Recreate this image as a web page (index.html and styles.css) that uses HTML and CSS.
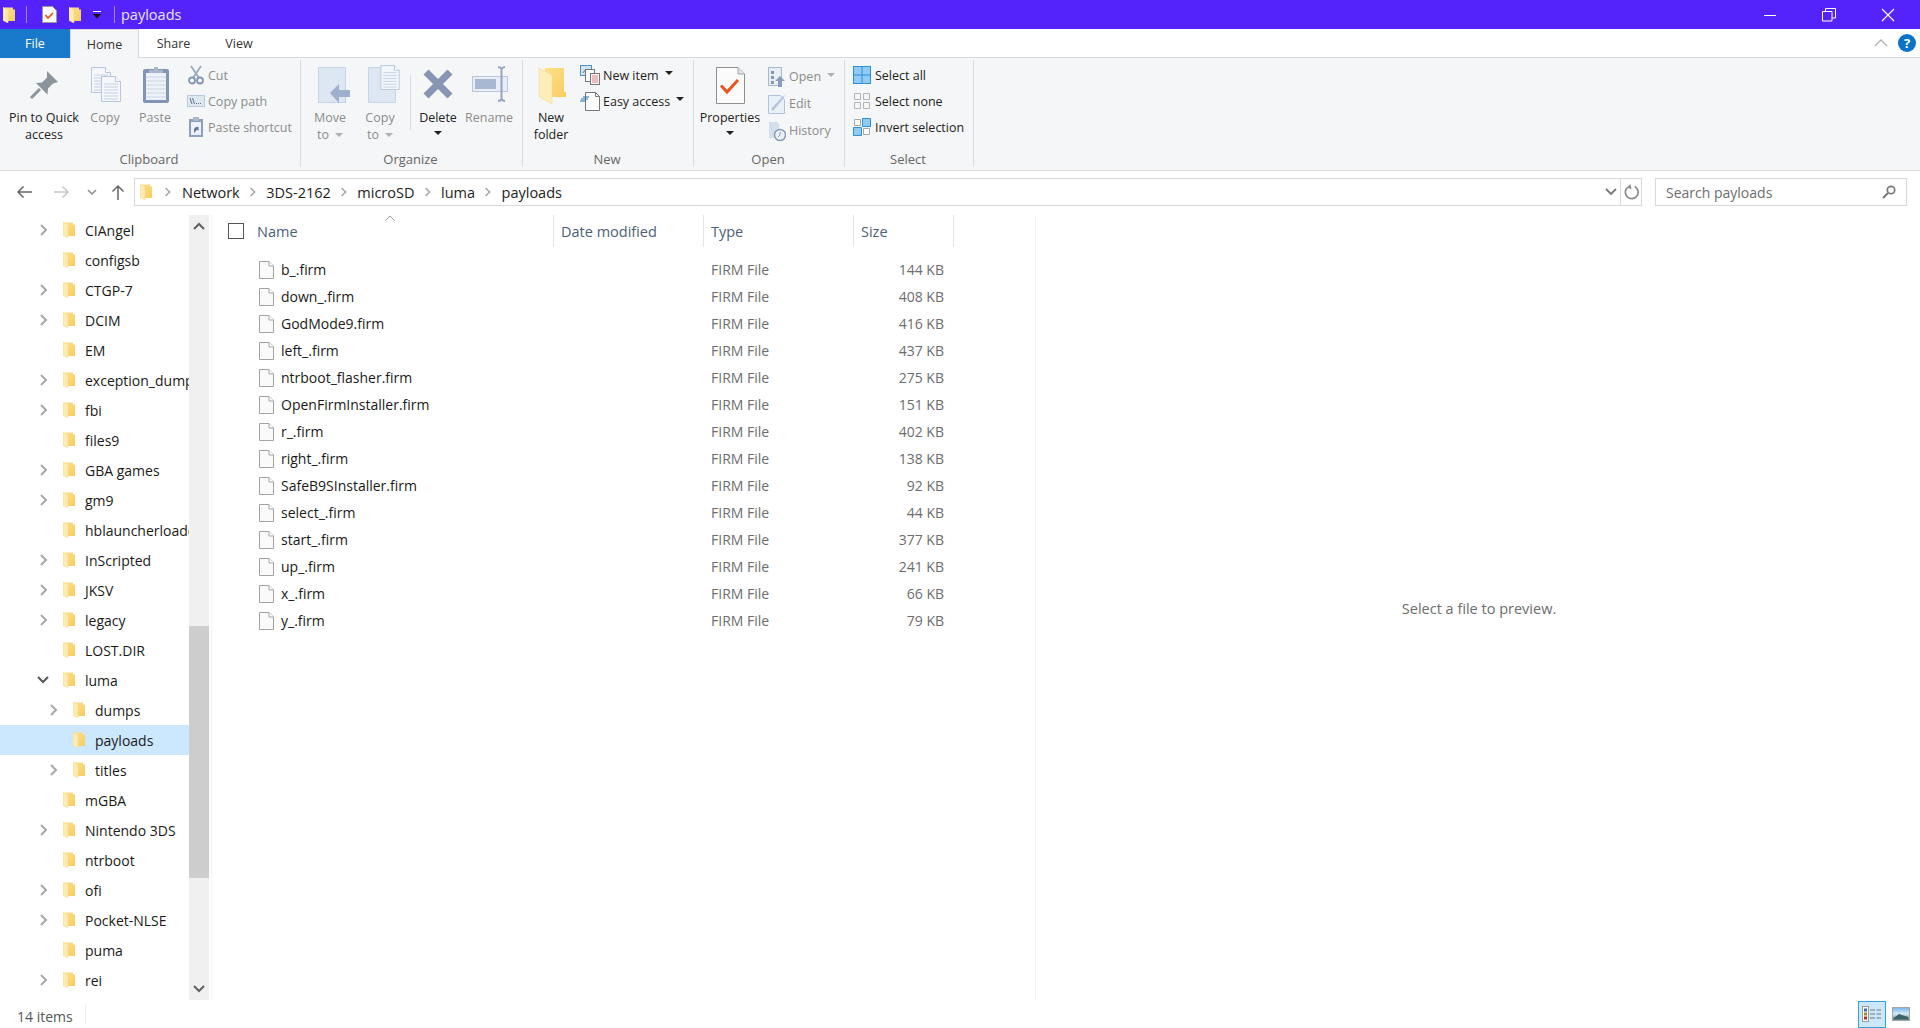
FILE: index.html
```html
<!DOCTYPE html>
<html lang="en">
<head>
<meta charset="utf-8">
<title>payloads</title>
<link rel="stylesheet" href="styles.css">
</head>
<body>
<svg class="sprite" aria-hidden="true">
  <defs>
    <linearGradient id="gold" x1="0" y1="0" x2="1" y2="1"><stop offset="0" stop-color="#fde08a"/><stop offset="1" stop-color="#f8cc5f"/></linearGradient>
    <symbol id="folder" viewBox="0 0 12 16">
      <path d="M2 .5h8v2h2v11.500H2z" fill="url(#gold)"/>
      <path d="M0 0L5 2.500V16L0 13.500z" fill="#fdebb0" stroke="#f3d98c" stroke-width=".5"/>
    </symbol>
    <symbol id="chev-r" viewBox="0 0 10 12"><path d="M2 1l5 5-5 5" fill="none" stroke="#a8a8a8" stroke-width="2"/></symbol>
    <symbol id="file" viewBox="0 0 15 18"><path d="M.5.500h9.500l4.500 4.500v12.500H.5z" fill="#fafafa" stroke="#a3a3a3"/><path d="M10 .5v4.500h4.500" fill="#fff" stroke="#a3a3a3"/></symbol>
    <symbol id="doc-lines" viewBox="0 0 20 26"><path d="M.5.500h14l5 5v20H.5z" fill="#f4f7fc" stroke="#b7c6de"/><path d="M14.500.5v5h5" fill="#fff" stroke="#b7c6de"/><path d="M3 8h14M3 11h14M3 14h14M3 17h14M3 20h14M3 23h14" stroke="#c5d1e4"/></symbol>
  </defs>
</svg>
<div class="window">
  <header class="titlebar">
    <svg class="qa-folder"><use href="#folder"/></svg>
    <span class="qa-sep sep-a"></span>
    <svg class="qa-prop" viewBox="0 0 15 17"><path d="M.5.500h10l4 4v12H.5z" fill="#fbfbfb" stroke="#9a9a9a"/><path d="M3.500 9l2.500 3 5-5" fill="none" stroke="#e8501c" stroke-width="1.700"/></svg>
    <svg class="qa-folder qa-folder-2"><use href="#folder"/></svg>
    <svg class="qa-drop" viewBox="0 0 8 8"><path d="M0 0h8v1H0z" fill="#fff"/><path d="M0 3h8L4 7.500z" fill="#111"/></svg>
    <span class="qa-sep sep-b"></span>
    <span class="win-title">payloads</span>
    <div class="win-controls">
      <svg class="wc" viewBox="0 0 14 14"><path d="M1 7.500h12" stroke="#fff"/></svg>
      <svg class="wc" viewBox="0 0 14 14"><path d="M.5 3.500h9.500v9.500H.5z M3.500 3.500V.5h10v9.500h-3.500" fill="none" stroke="#fff"/></svg>
      <svg class="wc" viewBox="0 0 14 14"><path d="M1 1l12 12M13 1L1 13" stroke="#fff" stroke-width="1.100"/></svg>
    </div>
  </header>

  <nav class="tabs">
    <span class="tab tab-file">File</span>
    <span class="tab tab-home">Home</span>
    <span class="tab tab-share">Share</span>
    <span class="tab tab-view">View</span>
    <svg class="collapse" viewBox="0 0 14 8"><path d="M1 7l6-6 6 6" fill="none" stroke="#b0b0b0" stroke-width="1.300"/></svg>
    <span class="help">?</span>
  </nav>

  <section class="ribbon">
    <div class="group g-clipboard">
      <div class="g-body">
        <div class="big w-pin">
          <svg class="big-ico" viewBox="0 0 40 40"><path d="M23 6l11 11-5 1.500-5 5-.5 6L12 18l6-.5 5-5z" fill="#8b949c"/><path d="M16 24L7 33" stroke="#8b949c" stroke-width="3"/></svg>
          <span class="big-t">Pin to Quick<br>access</span>
        </div>
        <div class="big w-copy off">
          <svg class="big-ico" viewBox="0 0 40 40"><use href="#doc-lines" x="6" y="2" width="20" height="26"/><use href="#doc-lines" x="16" y="11" width="20" height="26"/></svg>
          <span class="big-t">Copy</span>
        </div>
        <div class="big w-paste off">
          <svg class="big-ico" viewBox="0 0 40 40"><rect x="8" y="4" width="26" height="34" rx="2" fill="#8295b5"/><rect x="11" y="8" width="20" height="27" fill="#edf1f8"/><path d="M11 12h20M11 16h20M11 20h20M11 24h20M11 28h20M11 32h20" stroke="#cdd7e7"/><path d="M14 8V5h5V2h4v3h5v3z" fill="#a9b6cc"/></svg>
          <span class="big-t">Paste</span>
        </div>
        <div class="small-col off">
          <div class="small"><svg class="s-ico" viewBox="0 0 18 20"><path d="M4 1l8 12M14 1L6 13" stroke="#9aa8c0" stroke-width="1.800"/><circle cx="5" cy="15.500" r="3" fill="none" stroke="#8296b8" stroke-width="1.800"/><circle cx="13" cy="15.500" r="3" fill="none" stroke="#8296b8" stroke-width="1.800"/></svg><span>Cut</span></div>
          <div class="small"><svg class="s-ico" viewBox="0 0 18 20"><rect x=".5" y="4.500" width="17" height="11" fill="#dfe7f3" stroke="#bccadf"/><path d="M3 7l2 6M5.500 7l2 6" stroke="#5f7394"/><path d="M9 12.500h1M11 12.500h1M13 12.500h1" stroke="#5f7394"/></svg><span>Copy path</span></div>
          <div class="small"><svg class="s-ico" viewBox="0 0 18 20"><rect x="2" y="2" width="14" height="18" fill="#8ea0bd"/><rect x="4" y="5" width="10" height="13" fill="#eef2f8"/><rect x="6" y="0" width="6" height="4" fill="#a9b6cc"/><path d="M7 16v-4l2-2H7.500h4v4l-1.500-1.500L8 15z" fill="#5e7396"/></svg><span>Paste shortcut</span></div>
        </div>
      </div>
      <div class="g-label">Clipboard</div>
    </div>

    <div class="group g-organize">
      <div class="g-body">
        <div class="big w-move off">
          <svg class="big-ico" viewBox="0 0 40 40"><rect x="8.500" y="2.500" width="27" height="35" fill="#dde6f3" stroke="#c7d4e7"/><path d="M20 28l9-9v6h11v7H29v6z" fill="#9eb0cc"/></svg>
          <span class="big-t">Move<br>to<i class="caret caret-off"></i></span>
        </div>
        <div class="big w-copyto off">
          <svg class="big-ico" viewBox="0 0 40 40"><path d="M8.500 2.500h13v6h14v29h-27z" fill="#dde6f3" stroke="#c7d4e7"/><use href="#doc-lines" x="20" y="0" width="20" height="25"/></svg>
          <span class="big-t">Copy<br>to<i class="caret caret-off"></i></span>
        </div>
        <span class="o-sep"></span>
        <div class="big w-delete">
          <svg class="big-ico" viewBox="0 0 40 40"><path d="M8 7l24 24M32 7L8 31" stroke="#8797b3" stroke-width="7"/></svg>
          <span class="big-t">Delete<i class="caret caret-block"></i></span>
        </div>
        <div class="big w-rename off">
          <svg class="big-ico" viewBox="0 0 40 40"><rect x="3.500" y="11.500" width="35" height="15" fill="#e8eef7" stroke="#b8c7de"/><rect x="6" y="14" width="21" height="10" fill="#a8b8d2"/><path d="M29 2c2 0 3 1 3.500 2C33 3 34 2 36 2M32.500 4v30M29 36c2 0 3-1 3.500-2 .5 1 1.500 2 3.500 2" fill="none" stroke="#93a5c2" stroke-width="2"/></svg>
          <span class="big-t">Rename</span>
        </div>
      </div>
      <div class="g-label">Organize</div>
    </div>

    <div class="group g-new">
      <div class="g-body">
        <div class="big w-newf">
          <svg class="big-ico" viewBox="0 0 40 40"><path d="M14 3h19v24h2v5H14z" fill="url(#gold)"/><path d="M8 3l13 7v29L8 32z" fill="#fdeeb9" stroke="#f1dc9b" stroke-width=".6"/></svg>
          <span class="big-t">New<br>folder</span>
        </div>
        <div class="small-col">
          <div class="small s-new"><svg class="s-ico s-ico-w" viewBox="0 0 20 20"><rect x=".5" y=".5" width="11" height="10" fill="#cfe3f4" stroke="#4d93c4"/><path d="M3 8l2-3 2 2 2-2" stroke="#6a8d5a" fill="none"/><rect x="5.500" y="4.500" width="9" height="12" fill="#fff" stroke="#777"/><rect x="10.500" y="8.500" width="9" height="11" fill="#fdf3f3" stroke="#777"/><path d="M12 11h6M12 13h6M12 15h6M12 17h6" stroke="#d9828a"/></svg><span>New item</span><i class="caret caret-inline"></i></div>
          <div class="small s-new"><svg class="s-ico s-ico-w" viewBox="0 0 20 20"><path d="M5.500 1.500h10l4 4v14h-14z" fill="#fff" stroke="#777"/><path d="M15.500 1.500v4h4" fill="none" stroke="#777"/><path d="M1 8h7M3 6h6M0 10h6" stroke="#2b6cab" stroke-width="1.100"/></svg><span>Easy access</span><i class="caret caret-inline"></i></div>
        </div>
      </div>
      <div class="g-label">New</div>
    </div>

    <div class="group g-open">
      <div class="g-body">
        <div class="big w-props">
          <svg class="big-ico" viewBox="0 0 40 40"><path d="M6.500 2.500H28l6.500 6.500V38.500h-28z" fill="#fbfbfb" stroke="#8f8f8f"/><path d="M28 2.500V9h6.500" fill="#e4e4e4" stroke="#a5a5a5"/><path d="M11 20.500l6 6.500L28 15" fill="none" stroke="#e9551d" stroke-width="3"/></svg>
          <span class="big-t">Properties<i class="caret caret-block"></i></span>
        </div>
        <div class="small-col off col-open">
          <div class="small"><svg class="s-ico" viewBox="0 0 18 20"><rect x=".5" y=".5" width="13" height="18" fill="#e9eef6" stroke="#a9b8d0"/><path d="M3 4h3v3H3zM3 9h3v3H3zM3 14h3v3H3z" fill="#8497b6"/><path d="M12 9l5 5h-3v6h-4v-6H7z" fill="#8a9dbc"/></svg><span>Open</span><i class="caret caret-inline caret-off"></i></div>
          <div class="small"><svg class="s-ico" viewBox="0 0 18 20"><path d="M.5 1.500h12l4 4v14H.5z" fill="#eaf0f8" stroke="#b3c2da"/><path d="M3 15L14 3l3-2-2 4-10 12z" fill="#b7c6de"/></svg><span>Edit</span></div>
          <div class="small"><svg class="s-ico" viewBox="0 0 18 20"><path d="M1 1h8l2 2v14H1z" fill="#d5deec"/><circle cx="12" cy="14" r="5.500" fill="#eef2f8" stroke="#8496b3" stroke-width="1.400"/><path d="M12 11v3l-2 2" stroke="#8496b3" fill="none"/></svg><span>History</span></div>
        </div>
      </div>
      <div class="g-label">Open</div>
    </div>

    <div class="group g-select">
      <div class="g-body">
        <div class="small-col">
          <div class="small"><svg class="s-ico s-sel" viewBox="0 0 18 18"><rect x=".5" y=".5" width="17" height="17" fill="#8fcbf5" stroke="#2f8fd8"/><path d="M9 .5v17M.5 9h17" stroke="#2f8fd8"/></svg><span>Select all</span></div>
          <div class="small"><svg class="s-ico s-sel" viewBox="0 0 18 18"><path d="M1.500 1.500h6v6h-6zM10.500 1.500h6v6h-6zM1.500 10.500h6v6h-6zM10.500 10.500h6v6h-6z" fill="none" stroke="#b4b4b4"/></svg><span>Select none</span></div>
          <div class="small"><svg class="s-ico s-sel" viewBox="0 0 18 18"><path d="M1.500 1.500h6v6h-6zM10.500 10.500h6v6h-6z" fill="#fff" stroke="#a8a8a8"/><path d="M9.500.5h8v8h-8zM.5 9.500h8v8h-8z" fill="#8fcbf5" stroke="#2f8fd8"/></svg><span>Invert selection</span></div>
        </div>
      </div>
      <div class="g-label">Select</div>
    </div>
  </section>

  <section class="addressbar">
    <svg class="nav-arrow" viewBox="0 0 16 14"><path d="M16 7H2M7.500 1.500L2 7l5.500 5.500" fill="none" stroke="#666" stroke-width="1.500"/></svg>
    <svg class="nav-arrow nav-fwd" viewBox="0 0 16 14"><path d="M0 7h14M8.500 1.500L14 7l-5.500 5.500" fill="none" stroke="#c8c8c8" stroke-width="1.500"/></svg>
    <svg class="nav-down" viewBox="0 0 10 6"><path d="M1 1l4 4 4-4" fill="none" stroke="#8a8a8a" stroke-width="1.500"/></svg>
    <svg class="nav-up" viewBox="0 0 14 16"><path d="M7 16V2M1.500 7.500L7 2l5.500 5.500" fill="none" stroke="#666" stroke-width="1.500"/></svg>
    <div class="path-box">
      <svg class="path-folder"><use href="#folder"/></svg>
      <svg class="crumb-chev chev-first"><use href="#chev-r"/></svg><span class="crumb">Network</span>
      <svg class="crumb-chev"><use href="#chev-r"/></svg><span class="crumb">3DS-2162</span>
      <svg class="crumb-chev"><use href="#chev-r"/></svg><span class="crumb">microSD</span>
      <svg class="crumb-chev"><use href="#chev-r"/></svg><span class="crumb">luma</span>
      <svg class="crumb-chev"><use href="#chev-r"/></svg><span class="crumb">payloads</span>
      <svg class="path-down" viewBox="0 0 12 8"><path d="M1 1l5 5 5-5" fill="none" stroke="#777" stroke-width="1.800"/></svg>
      <span class="path-refresh"><svg viewBox="0 0 14 15"><path d="M3.500 3A6 6 0 1 0 10 2.400" fill="none" stroke="#8a8a8a" stroke-width="1.600"/><path d="M6 0L3 3.300l4 1.700z" fill="#8a8a8a"/></svg></span>
    </div>
    <div class="search-box">
      <span>Search payloads</span>
      <svg viewBox="0 0 14 14"><circle cx="9" cy="5" r="3.700" fill="none" stroke="#777" stroke-width="1.700"/><path d="M6 8l-5 5" stroke="#777" stroke-width="2"/></svg>
    </div>
  </section>

  <main class="content">
    <aside class="tree">
      <div class="t-row"><svg class="arrow"><use href="#chev-r"/></svg><svg class="t-folder"><use href="#folder"/></svg><span>CIAngel</span></div>
      <div class="t-row"><span class="arrow"></span><svg class="t-folder"><use href="#folder"/></svg><span>configsb</span></div>
      <div class="t-row"><svg class="arrow"><use href="#chev-r"/></svg><svg class="t-folder"><use href="#folder"/></svg><span>CTGP-7</span></div>
      <div class="t-row"><svg class="arrow"><use href="#chev-r"/></svg><svg class="t-folder"><use href="#folder"/></svg><span>DCIM</span></div>
      <div class="t-row"><span class="arrow"></span><svg class="t-folder"><use href="#folder"/></svg><span>EM</span></div>
      <div class="t-row"><svg class="arrow"><use href="#chev-r"/></svg><svg class="t-folder"><use href="#folder"/></svg><span>exception_dump</span></div>
      <div class="t-row"><svg class="arrow"><use href="#chev-r"/></svg><svg class="t-folder"><use href="#folder"/></svg><span>fbi</span></div>
      <div class="t-row"><span class="arrow"></span><svg class="t-folder"><use href="#folder"/></svg><span>files9</span></div>
      <div class="t-row"><svg class="arrow"><use href="#chev-r"/></svg><svg class="t-folder"><use href="#folder"/></svg><span>GBA games</span></div>
      <div class="t-row"><svg class="arrow"><use href="#chev-r"/></svg><svg class="t-folder"><use href="#folder"/></svg><span>gm9</span></div>
      <div class="t-row"><span class="arrow"></span><svg class="t-folder"><use href="#folder"/></svg><span>hblauncherloader</span></div>
      <div class="t-row"><svg class="arrow"><use href="#chev-r"/></svg><svg class="t-folder"><use href="#folder"/></svg><span>InScripted</span></div>
      <div class="t-row"><svg class="arrow"><use href="#chev-r"/></svg><svg class="t-folder"><use href="#folder"/></svg><span>JKSV</span></div>
      <div class="t-row"><svg class="arrow"><use href="#chev-r"/></svg><svg class="t-folder"><use href="#folder"/></svg><span>legacy</span></div>
      <div class="t-row"><span class="arrow"></span><svg class="t-folder"><use href="#folder"/></svg><span>LOST.DIR</span></div>
      <div class="t-row"><svg class="arrow arrow-open" viewBox="0 0 12 8"><path d="M1 1l5 5 5-5" fill="none" stroke="#555" stroke-width="2"/></svg><svg class="t-folder"><use href="#folder"/></svg><span>luma</span></div>
      <div class="t-row lv2"><svg class="arrow"><use href="#chev-r"/></svg><svg class="t-folder"><use href="#folder"/></svg><span>dumps</span></div>
      <div class="t-row lv2 t-sel"><span class="arrow"></span><svg class="t-folder"><use href="#folder"/></svg><span>payloads</span></div>
      <div class="t-row lv2"><svg class="arrow"><use href="#chev-r"/></svg><svg class="t-folder"><use href="#folder"/></svg><span>titles</span></div>
      <div class="t-row"><span class="arrow"></span><svg class="t-folder"><use href="#folder"/></svg><span>mGBA</span></div>
      <div class="t-row"><svg class="arrow"><use href="#chev-r"/></svg><svg class="t-folder"><use href="#folder"/></svg><span>Nintendo 3DS</span></div>
      <div class="t-row"><span class="arrow"></span><svg class="t-folder"><use href="#folder"/></svg><span>ntrboot</span></div>
      <div class="t-row"><svg class="arrow"><use href="#chev-r"/></svg><svg class="t-folder"><use href="#folder"/></svg><span>ofi</span></div>
      <div class="t-row"><svg class="arrow"><use href="#chev-r"/></svg><svg class="t-folder"><use href="#folder"/></svg><span>Pocket-NLSE</span></div>
      <div class="t-row"><span class="arrow"></span><svg class="t-folder"><use href="#folder"/></svg><span>puma</span></div>
      <div class="t-row"><svg class="arrow"><use href="#chev-r"/></svg><svg class="t-folder"><use href="#folder"/></svg><span>rei</span></div>
    </aside>
    <div class="scrollbar">
      <svg class="sb-btn" viewBox="0 0 12 8"><path d="M1 7l5-5 5 5" fill="none" stroke="#606060" stroke-width="2"/></svg>
      <div class="sb-track"><div class="sb-thumb"></div></div>
      <svg class="sb-btn" viewBox="0 0 12 8"><path d="M1 1l5 5 5-5" fill="none" stroke="#606060" stroke-width="2"/></svg>
    </div>
    <div class="list">
      <div class="l-head">
        <span class="h-check"></span>
        <span class="h-cell h-name">Name<svg class="sort" viewBox="0 0 10 6"><path d="M.5 5.500L5 1l4.500 4.500" fill="none" stroke="#9a9a9a"/></svg></span>
        <span class="h-cell h-date">Date modified</span>
        <span class="h-cell h-type">Type</span>
        <span class="h-cell h-size">Size</span>
      </div>
      <div class="l-row"><svg class="f-ico"><use href="#file"/></svg><span class="f-name">b_.firm</span><span class="f-type">FIRM File</span><span class="f-size">144 KB</span></div>
      <div class="l-row"><svg class="f-ico"><use href="#file"/></svg><span class="f-name">down_.firm</span><span class="f-type">FIRM File</span><span class="f-size">408 KB</span></div>
      <div class="l-row"><svg class="f-ico"><use href="#file"/></svg><span class="f-name">GodMode9.firm</span><span class="f-type">FIRM File</span><span class="f-size">416 KB</span></div>
      <div class="l-row"><svg class="f-ico"><use href="#file"/></svg><span class="f-name">left_.firm</span><span class="f-type">FIRM File</span><span class="f-size">437 KB</span></div>
      <div class="l-row"><svg class="f-ico"><use href="#file"/></svg><span class="f-name">ntrboot_flasher.firm</span><span class="f-type">FIRM File</span><span class="f-size">275 KB</span></div>
      <div class="l-row"><svg class="f-ico"><use href="#file"/></svg><span class="f-name">OpenFirmInstaller.firm</span><span class="f-type">FIRM File</span><span class="f-size">151 KB</span></div>
      <div class="l-row"><svg class="f-ico"><use href="#file"/></svg><span class="f-name">r_.firm</span><span class="f-type">FIRM File</span><span class="f-size">402 KB</span></div>
      <div class="l-row"><svg class="f-ico"><use href="#file"/></svg><span class="f-name">right_.firm</span><span class="f-type">FIRM File</span><span class="f-size">138 KB</span></div>
      <div class="l-row"><svg class="f-ico"><use href="#file"/></svg><span class="f-name">SafeB9SInstaller.firm</span><span class="f-type">FIRM File</span><span class="f-size">92 KB</span></div>
      <div class="l-row"><svg class="f-ico"><use href="#file"/></svg><span class="f-name">select_.firm</span><span class="f-type">FIRM File</span><span class="f-size">44 KB</span></div>
      <div class="l-row"><svg class="f-ico"><use href="#file"/></svg><span class="f-name">start_.firm</span><span class="f-type">FIRM File</span><span class="f-size">377 KB</span></div>
      <div class="l-row"><svg class="f-ico"><use href="#file"/></svg><span class="f-name">up_.firm</span><span class="f-type">FIRM File</span><span class="f-size">241 KB</span></div>
      <div class="l-row"><svg class="f-ico"><use href="#file"/></svg><span class="f-name">x_.firm</span><span class="f-type">FIRM File</span><span class="f-size">66 KB</span></div>
      <div class="l-row"><svg class="f-ico"><use href="#file"/></svg><span class="f-name">y_.firm</span><span class="f-type">FIRM File</span><span class="f-size">79 KB</span></div>
    </div>
    <div class="preview">Select a file to preview.</div>
  </main>

  <footer class="status">
    <span class="st-count">14 items</span>
    <span class="st-sep"></span>
    <span class="view-btn view-on"><svg viewBox="0 0 20 16"><rect x=".5" y=".5" width="6" height="15" fill="#fff" stroke="#9a9a9a"/><rect x="2" y="2.500" width="3" height="3" fill="#3a6ea5"/><rect x="2" y="6.500" width="3" height="3" fill="#a08a2a"/><rect x="2" y="10.500" width="3" height="3" fill="#b03020"/><path d="M8 4h5M14.500 4H19M8 8h5M14.500 8H19M8 12h5M14.500 12H19" stroke="#777" stroke-width="1"/></svg></span>
    <span class="view-btn view-off"><svg viewBox="0 0 18 14"><defs><linearGradient id="sky" x1="0" y1="0" x2="0" y2="1"><stop offset="0" stop-color="#6fb4ec"/><stop offset=".5" stop-color="#d8ecf5"/><stop offset="1" stop-color="#3f6f70"/></linearGradient></defs><rect x=".5" y=".5" width="17" height="13" fill="url(#sky)" stroke="#a5a5a5"/><path d="M2 11l5-4 9 3v2H2z" fill="#3c5f68"/></svg></span>
  </footer>
</div>
</body>
</html>
```

FILE: styles.css
```css
* { box-sizing: border-box; }
html, body { margin: 0; padding: 0; background: #fff; }
body { font-family: "Open Sans", "Noto Sans", "Liberation Sans", sans-serif; font-size: 12.500px; color: #1e1e1e; overflow: hidden; }
.sprite { display: block; width: 0; height: 0; overflow: hidden; }
.window { display: flex; flex-direction: column; width: 1920px; height: 1028px; }
svg { display: block; flex: none; }

/* title bar */
.titlebar { display: flex; align-items: center; height: 29px; background: #5423fb; flex: none; }
.qa-folder { width: 12px; height: 16px; margin-left: 3px; }
.qa-folder-2 { margin-left: 12px; }
.qa-sep { width: 1px; height: 17px; background: #9b84fb; }
.sep-a { margin-left: 11px; }
.qa-prop { width: 15px; height: 17px; margin-left: 15px; }
.qa-drop { width: 8px; height: 8px; margin-left: 12px; }
.sep-b { margin-left: 13px; }
.win-title { margin-left: 6px; font-size: 14.500px; color: #e9e3ff; }
.win-controls { margin-left: auto; display: flex; gap: 45px; padding-right: 25px; }
.wc { width: 14px; height: 14px; }

/* tabs */
.tabs { display: flex; align-items: stretch; height: 29px; border-bottom: 1px solid #d9d9d9; flex: none; color: #333; }
.tab { display: flex; align-items: center; justify-content: center; }
.tab-file { width: 70px; margin-bottom: -1px; background: #1979ca; color: #fff; }
.tab-home { width: 69px; margin-bottom: -1px; background: #f5f6f7; border: 1px solid #d9d9d9; border-bottom: 0; }
.tab-share { width: 69px; }
.tab-view { width: 62px; }
.collapse { width: 14px; height: 8px; margin: auto 0 auto auto; }
.help { width: 18px; height: 18px; margin: auto 4px auto 10px; border-radius: 50%; background: #0a72c8; color: #fff; font-weight: 700; font-size: 13px; line-height: 18px; text-align: center; }

/* ribbon */
.ribbon { display: flex; height: 113px; padding-top: 2px; background: #f5f6f7; border-bottom: 1px solid #d9d9d9; flex: none; }
.group { display: flex; flex-direction: column; height: 107px; border-right: 1px solid #dcdcdc; }
.g-clipboard { width: 301px; }
.g-organize { width: 222px; }
.g-new { width: 171px; }
.g-open { width: 151px; }
.g-select { width: 129px; }
.g-body { display: flex; height: 90px; }
.g-label { height: 17px; padding: 1px 2px 0 0; line-height: 17px; text-align: center; color: #666; font-size: 13px; }
.big { display: flex; flex-direction: column; align-items: center; flex: none; padding-top: 5px; text-align: center; line-height: 17px; color: #222; }
.big-ico { width: 40px; height: 40px; margin-bottom: 4px; overflow: visible; }
.big-t { display: block; white-space: nowrap; }
.off, .off .big-t { color: #8c8c8c; }
.w-pin { width: 88px; }
.w-copy { width: 34px; }
.w-paste { width: 60px; margin-left: 3px; }
.w-move { width: 56px; margin-left: 1px; }
.w-copyto { width: 44px; }
.o-sep { width: 1px; height: 55px; margin: 15px 0 0 8px; background: #dcdcdc; flex: none; }
.w-delete { width: 54px; }
.w-rename { width: 48px; }
.w-newf { width: 56px; }
.w-props { width: 72px; }
.small-col { display: flex; flex-direction: column; padding-top: 2px; flex: none; white-space: nowrap; }
.small { display: flex; align-items: center; height: 26px; }
.col-open { padding-top: 3px; }
.col-open .small { height: 27px; }
.s-ico { width: 18px; height: 20px; margin: 0 3px 0 2px; }
.s-ico-w { width: 20px; margin: 0 3px 0 1px; }
.s-sel { height: 18px; margin: 0 4px 0 8px; }
.caret { display: inline-block; width: 0; height: 0; border: 4px solid transparent; border-top-color: #222; border-bottom: 0; }
.caret-block { display: block; margin: 5px auto 0; }
.caret-inline { margin-left: 6px; margin-bottom: 4px; }
.caret-off { border-top-color: #b0b0b0; margin-left: 6px; vertical-align: 2px; }

/* address bar */
.addressbar { display: flex; align-items: center; height: 35px; padding-top: 7px; flex: none; }
.nav-arrow { width: 16px; height: 14px; margin-left: 16px; }
.nav-fwd { margin-left: 22px; }
.nav-down { width: 10px; height: 6px; margin-left: 17px; }
.nav-up { width: 14px; height: 16px; margin-left: 14px; }
.path-box { display: flex; align-items: center; width: 1508px; height: 28px; margin-left: 9px; border: 1px solid #d9d9d9; font-size: 14.500px; color: #222; }
.path-folder { width: 12px; height: 16px; margin-left: 5px; }
.crumb-chev { width: 10px; height: 12px; margin: 0 8.250px; transform: scale(.8); }
.chev-first { margin: 0 9px 0 11px; }
.crumb { white-space: nowrap; }
.path-down { width: 12px; height: 8px; margin-left: auto; }
.path-refresh { display: flex; align-items: center; justify-content: center; width: 21px; height: 26px; margin-left: 3px; border-left: 1px solid #d9d9d9; }
.path-refresh svg { width: 15px; height: 16px; }
.search-box { display: flex; align-items: center; justify-content: space-between; width: 252px; height: 28px; margin-left: 13px; padding: 0 10px; border: 1px solid #d9d9d9; font-size: 14px; color: #6d6d6d; }
.search-box svg { width: 14px; height: 14px; }

/* content */
.content { display: flex; flex: 1; min-height: 0; padding-top: 9px; }
.tree { width: 189px; flex: none; font-size: 14px; overflow: hidden; color: #1a1a1a; }
.t-row { display: flex; align-items: center; height: 30px; white-space: nowrap; }
.arrow { display: block; width: 10px; height: 12px; margin-left: 39px; flex: none; }
.arrow-open { height: 8px; width: 12px; margin-left: 37px; }
.t-folder { width: 12px; height: 16px; margin: 0 10px 0 14px; }
.lv2 .arrow { margin-left: 49px; }
.t-sel { background: #cce8ff; }
.scrollbar { display: flex; flex-direction: column; width: 20px; flex: none; background: #f0f0f0; }
.sb-btn { width: 12px; height: 8px; margin: 7px auto; }
.sb-track { flex: 1; padding-top: 389px; }
.sb-thumb { height: 252px; background: #cdcdcd; }
.list { width: 825px; margin-left: 2px; border-left: 1px solid #f2f2f2; border-right: 1px solid #f2f2f2; flex: none; }
.l-head { display: flex; align-items: center; height: 32px; margin-bottom: 9px; font-size: 14.500px; color: #4c607a; }
.h-check { width: 16px; height: 16px; margin-left: 16px; border: 1px solid #555; flex: none; }
.h-cell { display: flex; align-items: center; height: 32px; border-right: 1px solid #e5e5e5; flex: none; position: relative; }
.h-name { width: 310px; padding-left: 13px; }
.h-date { width: 150px; padding-left: 7px; }
.h-type { width: 150px; padding-left: 7px; }
.h-size { width: 100px; padding-left: 7px; }
.sort { width: 10px; height: 6px; position: absolute; right: 158px; top: 0; }
.l-row { display: flex; align-items: center; height: 27px; font-size: 14px; }
.f-ico { width: 15px; height: 18px; margin-left: 47px; }
.f-name { width: 430px; margin-left: 7px; color: #1a1a1a; }
.f-type { width: 170px; color: #6d6d6d; }
.f-size { width: 63px; text-align: right; color: #6d6d6d; white-space: nowrap; }
.preview { flex: 1; display: flex; align-items: center; justify-content: center; padding: 2px 0 0 2px; font-size: 14.500px; color: #6d6d6d; }

/* status */
.status { display: flex; align-items: center; height: 28px; flex: none; font-size: 14px; color: #555; }
.st-count { margin: 4px 0 0 17px; width: 68px; }
.st-sep { width: 1px; height: 20px; background: #efefef; }
.view-btn { display: flex; align-items: center; justify-content: center; }
.view-on { width: 28px; height: 27px; margin-left: auto; background: #cce8ff; border: 1px solid #3a9fdd; }
.view-on svg { width: 20px; height: 16px; }
.view-off { width: 18px; height: 14px; margin: 0 10px 0 6px; }
.view-off svg { width: 18px; height: 14px; }
```
